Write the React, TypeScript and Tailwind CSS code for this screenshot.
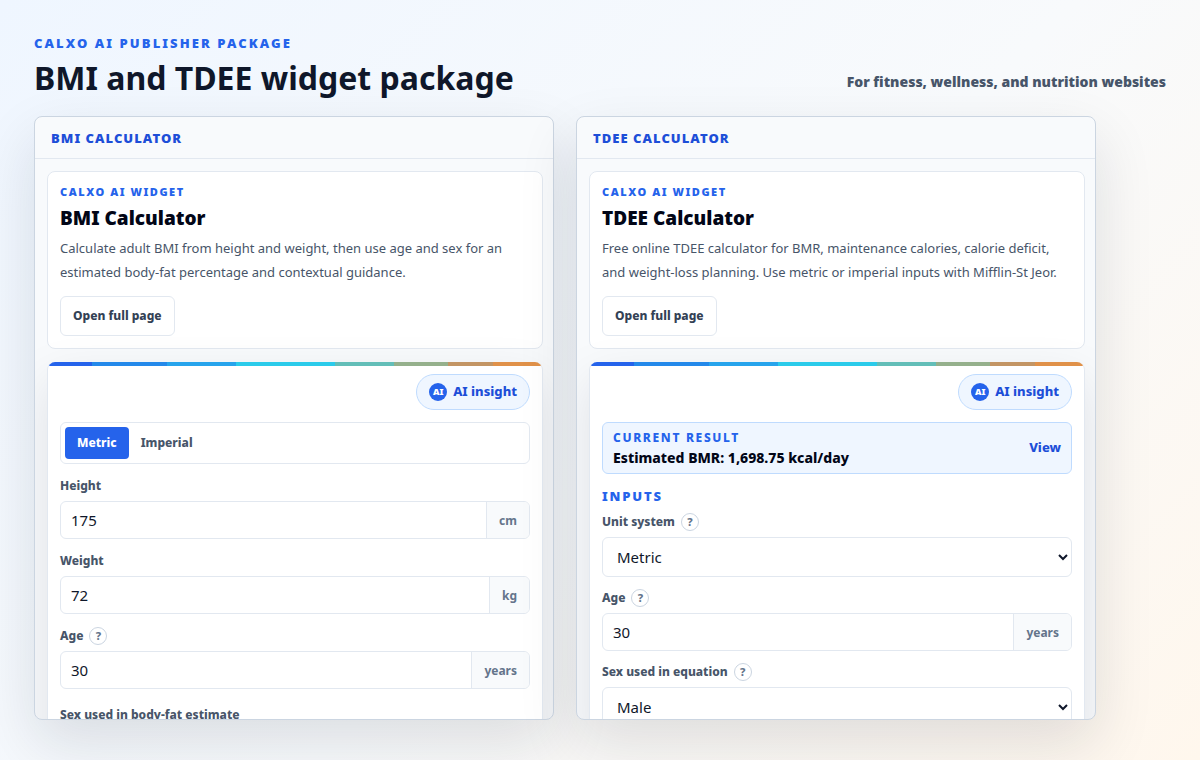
import React, { useState } from 'react';

interface FieldLabelProps {
  htmlFor: string;
  text: string;
  help?: boolean;
}

function FieldLabel({ htmlFor, text, help }: FieldLabelProps) {
  return (
    <div className="flex h-5 items-center gap-1.5">
      <label htmlFor={htmlFor} className="text-xs leading-5 font-extrabold text-[#475569]">
        {text}
      </label>
      {help && (
        <button
          type="button"
          aria-label={`Help: ${text}`}
          className="flex size-[18px] items-center justify-center rounded-full border border-[#cbd5e1] bg-white text-[11px] leading-4 font-extrabold text-[#64748b]"
        >
          ?
        </button>
      )}
    </div>
  );
}

interface NumberFieldProps {
  id: string;
  label: string;
  unit: string;
  initial: string;
  help?: boolean;
}

function NumberField({ id, label, unit, initial, help }: NumberFieldProps) {
  const [value, setValue] = useState(initial);

  return (
    <div className="flex flex-col gap-[5px]">
      <FieldLabel htmlFor={id} text={label} help={help} />
      <div className="flex h-[38px] overflow-hidden rounded-md border border-[#e2e8f0] bg-white">
        <input
          id={id}
          type="text"
          inputMode="decimal"
          value={value}
          onChange={(e) => setValue(e.target.value)}
          className="min-w-0 flex-1 px-2.5 text-[15px] text-[#0f172a] outline-none"
        />
        <span className="flex items-center border-l border-[#e2e8f0] bg-[#f8fafc] px-3 pt-0.5 text-xs font-bold text-[#64748b]">
          {unit}
        </span>
      </div>
    </div>
  );
}

interface SelectFieldProps {
  id: string;
  label: string;
  options: string[];
  help?: boolean;
}

function SelectField({ id, label, options, help }: SelectFieldProps) {
  return (
    <div className="flex flex-col gap-[5px]">
      <FieldLabel htmlFor={id} text={label} help={help} />
      <select
        id={id}
        className="h-10 w-full rounded-md border border-[#e2e8f0] bg-white px-2.5 text-[15px] text-[#0f172a]"
      >
        {options.map((option) => (
          <option key={option}>{option}</option>
        ))}
      </select>
    </div>
  );
}

interface WidgetPanelProps {
  heading: string;
  title: string;
  description: string;
  children: React.ReactNode;
}

function WidgetPanel({ heading, title, description, children }: WidgetPanelProps) {
  return (
    <section className="flex min-h-0 flex-col overflow-hidden rounded-lg border border-[#cbd5e1] bg-[#f8fafc] shadow-[0_24px_60px_rgba(15,23,42,0.12)]">
      <h2 className="shrink-0 border-b border-[#e2e8f0] px-4 pt-3 pb-2.5 text-[13px] leading-[19px] font-black tracking-[0.08em] text-[#1d4ed8] uppercase">
        {heading}
      </h2>

      <div className="flex flex-col gap-[13px] pt-3 pr-2.5 pl-3">
        <div className="rounded-lg border border-[#e2e8f0] bg-white p-3">
          <p className="text-[11px] leading-4 font-black tracking-[0.14em] text-[#2563eb] uppercase">
            Calxo AI widget
          </p>
          <h3 className="mt-1 text-[19px] leading-7 font-black text-[#020617]">{title}</h3>
          <p className="mt-1 text-[13px] leading-6 text-[#475569]">{description}</p>
          <a
            href="#"
            className="mt-3 inline-flex h-10 items-center rounded-md border border-[#e2e8f0] bg-white px-3 text-xs font-extrabold text-[#334155]"
          >
            Open full page
          </a>
        </div>

        <div className="overflow-hidden rounded-lg border-x border-[#e2e8f0] bg-white shadow-[0_18px_50px_rgba(15,23,42,0.1)]">
          <div className="h-1 bg-[linear-gradient(90deg,#2563eb_9%,#2489ea_9%_24%,#27a4ec_24%_38%,#2bcbea_38%_58%,#63beb8_58%_70%,#95b08c_70%_81%,#c39564_81%_90%,#e09149_90%)]" />
          <div className="px-3 pt-2 pb-3">
            <div className="flex justify-end">
              <button
                type="button"
                className="flex h-9 items-center gap-1.5 rounded-full border border-[#bfdbfe] bg-[#eff6ff] px-3 text-[13px] font-extrabold text-[#1d4ed8]"
              >
                <span className="flex size-[18px] items-center justify-center rounded-full bg-[#2563eb] text-[9px] font-black text-white">
                  AI
                </span>
                AI insight
              </button>
            </div>
            {children}
          </div>
        </div>
      </div>
    </section>
  );
}

function BmiForm() {
  const [system, setSystem] = useState('Metric');

  return (
    <>
      <div className="mt-3 flex rounded-md border border-[#e2e8f0] bg-white p-1">
        {['Metric', 'Imperial'].map((name) => (
          <button
            key={name}
            type="button"
            aria-pressed={system === name}
            onClick={() => setSystem(name)}
            className={
              system === name
                ? 'h-8 rounded-sm bg-[#2563eb] px-3 text-xs font-extrabold text-white'
                : 'h-8 rounded-sm px-3 text-xs font-extrabold text-[#475569]'
            }
          >
            {name}
          </button>
        ))}
      </div>
      <div className="mt-3 flex flex-col gap-3">
        <NumberField id="bmi-height" label="Height" unit="cm" initial="175" />
        <NumberField id="bmi-weight" label="Weight" unit="kg" initial="72" />
        <NumberField id="bmi-age" label="Age" unit="years" initial="30" help />
        <div className="pt-1">
          <SelectField id="bmi-sex" label="Sex used in body-fat estimate" options={['Male', 'Female']} />
        </div>
      </div>
    </>
  );
}

function TdeeForm() {
  return (
    <>
      <div className="mt-3 flex h-[52px] items-center justify-between rounded-md border border-[#bfdbfe] bg-[#eff6ff] px-2.5">
        <div>
          <p className="text-xs leading-5 font-extrabold tracking-[0.14em] text-[#2563eb] uppercase">Current result</p>
          <p className="text-sm leading-5 font-extrabold text-[#020617]">Estimated BMR: 1,698.75 kcal/day</p>
        </div>
        <a href="#" className="text-[13px] font-extrabold text-[#1d4ed8]">
          View
        </a>
      </div>
      <h4 className="mt-3 text-[13px] leading-5 font-black tracking-[0.14em] text-[#2563eb] uppercase">Inputs</h4>
      <div className="mt-1.5 flex flex-col gap-[11px]">
        <SelectField id="tdee-units" label="Unit system" options={['Metric', 'Imperial']} help />
        <NumberField id="tdee-age" label="Age" unit="years" initial="30" help />
        <SelectField id="tdee-sex" label="Sex used in equation" options={['Male', 'Female']} help />
      </div>
    </>
  );
}

function App() {
  return (
    <div className="flex h-screen flex-col bg-[linear-gradient(135deg,#eff6ff_0%,#f8fafc_55%,#fff7ed_100%)] px-[34px] pt-[34px] pb-10 font-['Noto_Sans',sans-serif]">
      <header className="mb-4 flex shrink-0 items-end justify-between gap-6">
        <div>
          <p className="text-[13px] leading-[18px] font-black tracking-[0.16em] text-[#2563eb] uppercase">
            Calxo AI publisher package
          </p>
          <h1 className="mt-1 text-[32px] leading-11 font-bold text-[#0f172a]">BMI and TDEE widget package</h1>
        </div>
        <p className="pb-1.5 text-sm leading-6 font-black text-[#475569]">
          For fitness, wellness, and nutrition websites
        </p>
      </header>

      <main className="grid min-h-0 flex-1 grid-cols-[repeat(2,minmax(0,520px))] grid-rows-1 gap-[22px]">
        <WidgetPanel
          heading="BMI Calculator"
          title="BMI Calculator"
          description="Calculate adult BMI from height and weight, then use age and sex for an estimated body-fat percentage and contextual guidance."
        >
          <BmiForm />
        </WidgetPanel>
        <WidgetPanel
          heading="TDEE Calculator"
          title="TDEE Calculator"
          description="Free online TDEE calculator for BMR, maintenance calories, calorie deficit, and weight-loss planning. Use metric or imperial inputs with Mifflin-St Jeor."
        >
          <TdeeForm />
        </WidgetPanel>
      </main>
    </div>
  );
}

export default App;
